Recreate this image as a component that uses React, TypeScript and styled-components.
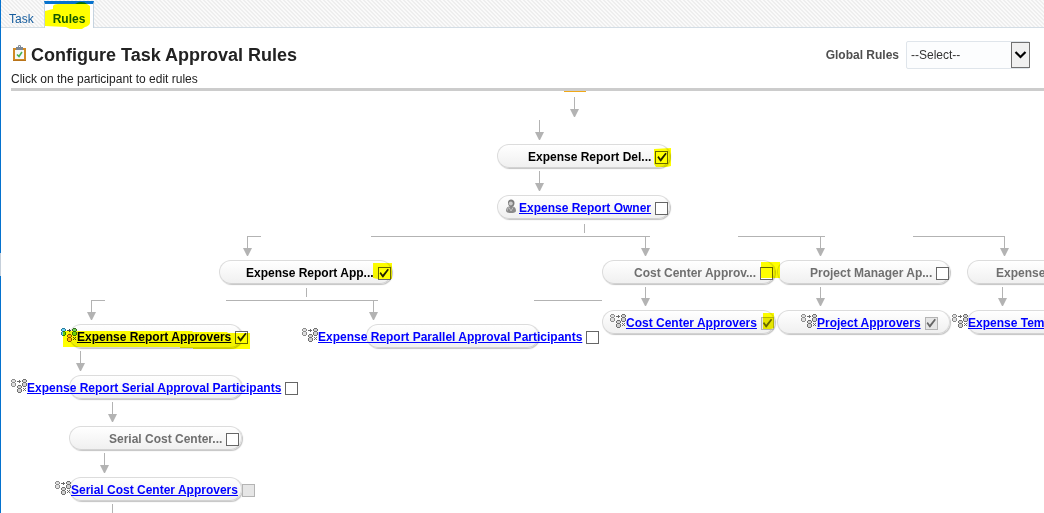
import React from "react";
import styled, { createGlobalStyle, css } from "styled-components";

const GlobalStyle = createGlobalStyle`
  *, *::before, *::after { box-sizing: border-box; }
  body {
    margin: 0;
    background: #fff;
    color: #222;
    font: 12px/16px "Liberation Sans", Arial, Helvetica, sans-serif;
  }
`;

const Page = styled.div`
  position: relative;
  display: flex;
  flex-direction: column;
  min-height: 100vh;
  overflow: hidden;
`;

const Rail = styled.div`
  position: absolute;
  inset: 0 auto 0 0;
  width: 1px;
  background: #0572ce;
  z-index: 2;
`;

const RailGrip = styled.div`
  position: absolute;
  top: 253px;
  width: 1px;
  height: 23px;
  background: #c5cfda;
`;

const TabBar = styled.nav`
  position: relative;
  display: flex;
  align-items: stretch;
  height: 28px;
  padding-top: 1px;
  border-bottom: 1px solid #d3dde5;
  background: linear-gradient(45deg, #fafafa 25%, #eeeeee 25% 50%, #fafafa 50% 75%, #eeeeee 75%) 0 0 / 4px 4px;
`;

const Tab = styled.a<{ $active?: boolean }>`
  padding: 10px 9px 0;
  color: #145c9e;
  text-decoration: none;
  ${(p) =>
    p.$active &&
    css`
      padding: 7px 8px 0;
      margin-left: 1px;
      margin-bottom: -1px;
      font-weight: bold;
      color: #13598f;
      background: #fff;
      border: solid #c5d3df;
      border-width: 3px 1px 0;
      border-top-color: #0572ce;
    `}
`;

const TabMarker = styled.svg`
  position: absolute;
  left: 44px;
  top: 0;
  mix-blend-mode: multiply;
  pointer-events: none;
`;

const Header = styled.header`
  display: flex;
  justify-content: space-between;
  align-items: flex-start;
  margin-left: 11px;
  padding: 13px 14px 1px 0;
  border-bottom: 3px solid #cccccc;
`;

const TitleRow = styled.div`
  display: flex;
  align-items: center;
  gap: 4px;
  height: 28px;
`;

const Title = styled.h1`
  margin: 0;
  font-size: 18px;
  line-height: 28px;
  color: #222;
`;

const Hint = styled.p`
  margin: 0;
  padding-top: 2px;
`;

const Field = styled.div`
  display: flex;
  align-items: center;
  gap: 7px;
`;

const FieldLabel = styled.label`
  font-weight: bold;
  color: #4f4f4f;
`;

const SelectBox = styled.div`
  position: relative;
  width: 124px;
  height: 28px;
`;

const Select = styled.select`
  appearance: none;
  width: 100%;
  height: 100%;
  padding: 0 20px 0 4px;
  border: 1px solid #dfe5eb;
  border-radius: 2px;
  background: #fcfdfe;
  color: #333;
  font: inherit;
`;

const SelectArrow = styled.svg`
  position: absolute;
  top: 1px;
  right: 0;
  pointer-events: none;
`;

const Canvas = styled.main`
  position: relative;
  flex: 1;
  min-height: 400px;
  overflow: hidden;
`;

const Connectors = styled.svg`
  position: absolute;
  inset: 0;
  width: 100%;
  height: 100%;
  fill: #b3b3b3;
`;

const Markers = styled(Connectors)`
  fill: #ffff00;
  mix-blend-mode: multiply;
  pointer-events: none;
`;

const Pill = styled.div<{ $x: number; $y: number }>`
  position: absolute;
  left: ${(p) => p.$x}px;
  top: ${(p) => p.$y}px;
  width: 173px;
  height: 24px;
  border: 1px solid #dcdcdc;
  border-bottom-color: #d2d2d2;
  border-radius: 12px;
  background: linear-gradient(#ffffff, #f0f0f0);
  box-shadow: 1px 1px 1px #c4c4c4;
`;

const NodeContent = styled.div<{ $x: number; $y: number }>`
  position: absolute;
  left: ${(p) => p.$x}px;
  top: ${(p) => p.$y}px;
  display: flex;
  align-items: center;
  height: 26px;
  white-space: nowrap;
  font-weight: bold;
`;

const NodeLink = styled.a`
  color: #0000ff;
  text-decoration: underline;
`;

const NodeLabel = styled.label<{ $muted?: boolean }>`
  color: ${(p) => (p.$muted ? "#6f6f6f" : "#000")};
`;

const Check = styled.input`
  appearance: none;
  position: relative;
  flex: none;
  width: 13px;
  height: 13px;
  margin: 0 0 0 4px;
  border: 1px solid #666;
  background: #fff;
  &:disabled {
    border-color: #b4b4b4;
    background: #e6e6e6;
  }
  &:checked::before {
    content: "";
    position: absolute;
    inset: 0;
    background: #222;
    clip-path: polygon(9% 52%, 20% 42%, 38% 66%, 82% 12%, 94% 20%, 42% 91%, 36% 91%);
  }
  &:checked:disabled::before {
    background: #666;
  }
`;

const IconSlot = styled.svg`
  flex: none;
  margin-top: -2px;
`;

function Person({ x, y, fill, stroke }: { x: number; y: number; fill: string; stroke: string }) {
  return (
    <g transform={`translate(${x} ${y})`}>
      <path d="M1 0 H4 V1 H5 V3 H4 V4 H5 V7 H4 V8 H1 V7 H0 V4 H1 V3 H0 V1 H1 Z" fill={stroke} />
      <rect x="1" y="1" width="3" height="2" fill={fill} />
      <rect x="1" y="4" width="3" height="3" fill={fill} />
    </g>
  );
}

function GroupIcon({ color }: { color?: boolean }) {
  const line = color ? "#4a4a4a" : "#6a6a6a";
  return (
    <IconSlot width="16" height="16" viewBox="0 0 16 16" aria-hidden="true">
      <Person x={0} y={0} fill={color ? "#6fd0f5" : "#dedede"} stroke={color ? "#2a7d9c" : "#8c8c8c"} />
      <Person x={11} y={0} fill={color ? "#6fd25a" : "#d0d0d0"} stroke={color ? "#3a6d22" : "#707070"} />
      <Person x={6} y={6} fill={color ? "#ffb44a" : "#d0d0d0"} stroke={color ? "#8a5510" : "#707070"} />
      <path d="M6 2 H8 V1 H9 V2 H10 V3 H9 V4 H8 V3 H6 Z" fill={line} />
      <path d="M12 9 H13 V10 H14 V9 H15 V10 H14 V11 H15 V12 H14 V11 H13 V12 H12 V11 H13 V10 H12 Z" fill={line} />
    </IconSlot>
  );
}

function UserIcon() {
  return (
    <IconSlot width="16" height="16" viewBox="0 0 16 16" aria-hidden="true">
      <path d="M3 12 C3 9.500 4 8 6 7.500 H10 C12 8 13 9.500 13 12 C12.500 13.500 11 14 8 14 C5 14 3.500 13.500 3 12 Z" fill="#8b8b8b" />
      <path d="M4.500 11.500 C4.500 9.500 5 9 6 8.500 L8 12 L10 8.500" fill="none" stroke="#c4c4c4" />
      <path d="M5 3.500 C5 1.500 6.500 0.500 8 0.500 C10 0.500 11.500 2 11.500 4 C11.500 6.500 10 8 8.200 8 C6.200 8 5 6 5 3.500 Z" fill="#7c7c7c" />
      <circle cx="7.800" cy="4.600" r="2" fill="#cacaca" />
    </IconSlot>
  );
}

function ClipboardIcon() {
  return (
    <svg width="16" height="20" viewBox="0 0 16 20" aria-hidden="true">
      <rect x="3" y="4" width="11" height="11" fill="#f6f9fb" stroke="#d08a26" strokeWidth="2" />
      <rect x="2" y="15" width="13" height="1" fill="#b9741a" />
      <path d="M5 5 V2 H7 V1 Q7 0 8.500 0 Q10 0 10 1 V2 H12 V5 Z" fill="#7c8793" />
      <rect x="8" y="1" width="1" height="1" fill="#fff" />
      <path d="M6 9.500 L8 11.500 L11 7" fill="none" stroke="#4caf50" strokeWidth="1.600" />
    </svg>
  );
}

type FlowNode = {
  pill: [number, number];
  x: number;
  text: string;
  icon?: "group" | "groupColor" | "user";
  muted?: boolean;
  checked?: boolean;
  disabled?: boolean;
};

const nodes: FlowNode[] = [
  { pill: [497, 53], x: 528, text: "Expense Report Del...", checked: true },
  { pill: [497, 104], x: 503, text: "Expense Report Owner", icon: "user" },
  { pill: [219, 169], x: 246, text: "Expense Report App...", checked: true },
  { pill: [602, 169], x: 634, text: "Cost Center Approv...", muted: true },
  { pill: [777, 169], x: 810, text: "Project Manager Ap...", muted: true },
  { pill: [967, 169], x: 996, text: "Expense Template...", muted: true },
  { pill: [602, 219], x: 610, text: "Cost Center Approvers", icon: "group", checked: true, disabled: true },
  { pill: [777, 219], x: 801, text: "Project Approvers", icon: "group", checked: true, disabled: true },
  { pill: [967, 219], x: 952, text: "Expense Template Approvers", icon: "group", checked: true, disabled: true },
  { pill: [69, 233], x: 61, text: "Expense Report Approvers", icon: "groupColor", checked: true },
  { pill: [366, 233], x: 302, text: "Expense Report Parallel Approval Participants", icon: "group" },
  { pill: [69, 284], x: 11, text: "Expense Report Serial Approval Participants", icon: "group" },
  { pill: [69, 335], x: 109, text: "Serial Cost Center...", muted: true },
  { pill: [69, 386], x: 55, text: "Serial Cost Center Approvers", icon: "group", disabled: true },
];

/* Arrows: centre column, top of the shaft, tip of the head. */
const arrows: [number, number, number][] = [
  [574, 6, 26],
  [539, 29, 49],
  [539, 80, 100],
  [247, 145, 165],
  [645, 145, 165],
  [820, 145, 165],
  [1004, 145, 165],
  [645, 196, 215],
  [820, 196, 215],
  [1002, 196, 215],
  [91, 209, 229],
  [373, 209, 229],
  [80, 260, 280],
  [112, 311, 331],
  [104, 362, 382],
];

/* Plain segments: x, y, width, height. */
const segments: [number, number, number, number][] = [
  [584, 133, 1, 9],
  [247, 145, 14, 1],
  [371, 145, 279, 1],
  [738, 145, 87, 1],
  [913, 145, 92, 1],
  [306, 197, 1, 9],
  [91, 209, 14, 1],
  [226, 209, 152, 1],
  [534, 209, 68, 1],
  [112, 413, 1, 20],
];

function FlowItem({ node, id }: { node: FlowNode; id: string }) {
  const [px, py] = node.pill;
  return (
    <>
      <Pill $x={px} $y={py} />
      <NodeContent $x={node.x} $y={py}>
        {node.icon === "user" && <UserIcon />}
        {node.icon === "group" && <GroupIcon />}
        {node.icon === "groupColor" && <GroupIcon color />}
        {node.icon ? (
          <NodeLink href="#" id={`${id}-name`}>
            {node.text}
          </NodeLink>
        ) : (
          <NodeLabel htmlFor={id} id={`${id}-name`} $muted={node.muted}>
            {node.text}
          </NodeLabel>
        )}
        <Check
          type="checkbox"
          id={id}
          aria-labelledby={`${id}-name`}
          defaultChecked={node.checked}
          disabled={node.disabled}
        />
      </NodeContent>
    </>
  );
}

export default function App() {
  return (
    <Page>
      <GlobalStyle />
      <Rail>
        <RailGrip />
      </Rail>
      <TabBar>
        <Tab href="#task">Task</Tab>
        <Tab href="#rules" $active aria-current="page">
          Rules
        </Tab>
        <TabMarker width="50" height="30" viewBox="0 0 50 30" aria-hidden="true">
          <path
            d="M1 26 V11 L9 9 V6 Q10 4 14 4 H31 Q34 2 37 2 Q41 2 43 4 L46 6 V23 Q45 26 41 27 L38 29 H26 L22 27 Z"
            fill="#ffff00"
          />
        </TabMarker>
      </TabBar>
      <Header>
        <div>
          <TitleRow>
            <ClipboardIcon />
            <Title>Configure Task Approval Rules</Title>
          </TitleRow>
          <Hint>Click on the participant to edit rules</Hint>
        </div>
        <Field>
          <FieldLabel htmlFor="global-rules">Global Rules</FieldLabel>
          <SelectBox>
            <Select id="global-rules">
              <option>--Select--</option>
            </Select>
            <SelectArrow width="19" height="26" viewBox="0 0 19 26" aria-hidden="true">
              <rect x="0.5" y="0.5" width="18" height="25" fill="#f0f0f0" stroke="#707070" />
              <path d="M4.500 10 L9.500 15 L14.500 10" fill="none" stroke="#000" strokeWidth="2.200" />
            </SelectArrow>
          </SelectBox>
        </Field>
      </Header>
      <Canvas>
        <Connectors aria-hidden="true">
          <rect x="564" y="0" width="22" height="1" fill="#f0a818" />
          {segments.map(([x, y, w, h]) => (
            <rect key={`${x}-${y}`} x={x} y={y} width={w} height={h} />
          ))}
          {arrows.map(([x, top, tip]) => (
            <path
              key={`${x}-${top}`}
              d={`M${x} ${top} H${x + 1} V${tip - 8} H${x + 5} L${x + 1} ${tip} H${x} L${x - 4} ${tip - 8} H${x} Z`}
            />
          ))}
        </Connectors>
        {nodes.map((node, i) => (
          <FlowItem key={node.text} node={node} id={`participant-${i}`} />
        ))}
        <Markers aria-hidden="true">
          <path d="M654 58 L671 57 V75 L667 76 H656 L654 73 Z" />
          <path d="M373 172 H392 V188 H378 L373 187 Z" />
          <path d="M761 171 H780 V187 H761 Z" />
          <path d="M763 222 H774 V237 L771 238 H763 Z" />
          <path d="M63 240 H192 L193 241 H227 L228 242 H250 V258 H193 V257 H180 V256 H63 Z" />
        </Markers>
      </Canvas>
    </Page>
  );
}
